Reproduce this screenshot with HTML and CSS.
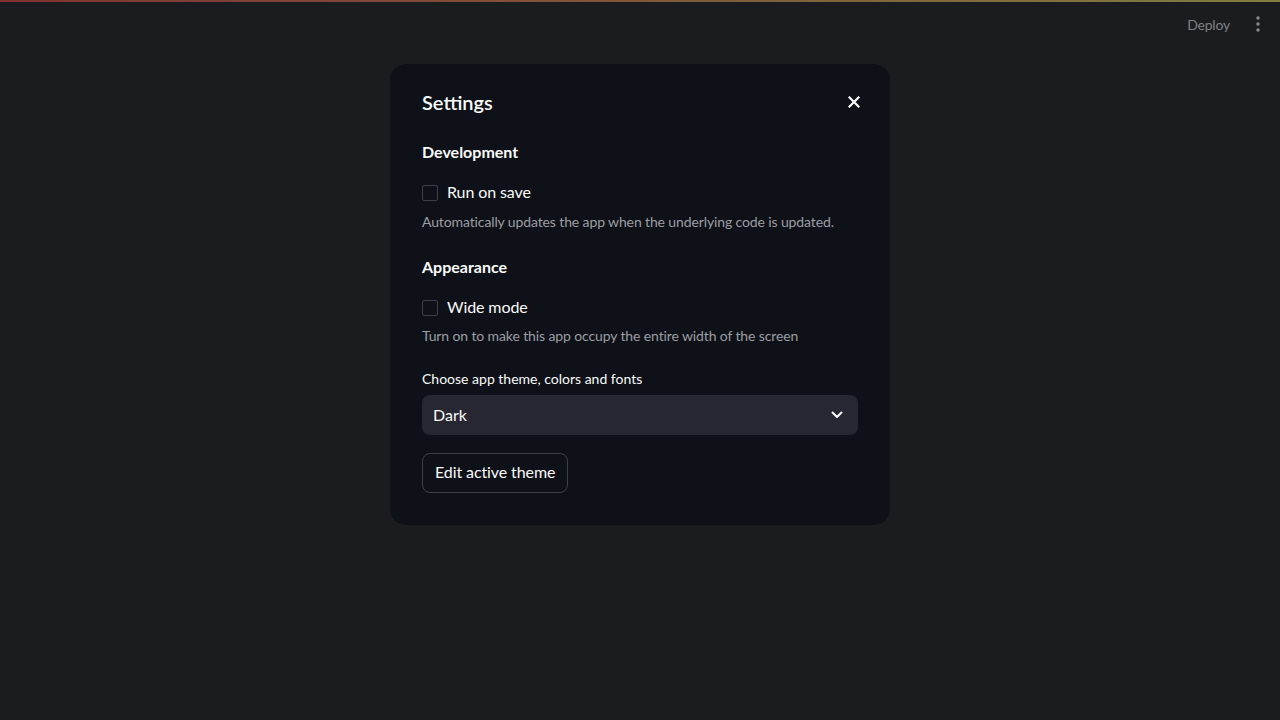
FILE: index.html
```html
<!DOCTYPE html>
<html>
<head>
<meta charset="utf-8">
<link rel="stylesheet" href="styles.css">
</head>
<body>
<div class="decoration"></div>
<header class="topbar">
  <span class="deploy">Deploy</span>
  <span class="kebab">
    <svg width="4" height="16" viewBox="0 0 4 16"><circle cx="2" cy="2" r="1.7" fill="#8a8b90"/><circle cx="2" cy="8" r="1.7" fill="#8a8b90"/><circle cx="2" cy="14" r="1.7" fill="#8a8b90"/></svg>
  </span>
</header>
<main class="stage">
  <section class="modal">
    <div class="modal-head">
      <h2 class="title">Settings</h2>
      <span class="close">
        <svg width="12" height="12" viewBox="0 0 12 12"><path d="M1.5 1.5 L10.5 10.5 M10.5 1.5 L1.5 10.5" stroke="#fafafa" stroke-width="2.2" stroke-linecap="square"/></svg>
      </span>
    </div>
    <div class="group">
      <h3 class="group-title">Development</h3>
      <label class="check"><span class="box"></span><span class="check-label">Run on save</span></label>
      <p class="help">Automatically updates the app when the underlying code is updated.</p>
    </div>
    <div class="group">
      <h3 class="group-title">Appearance</h3>
      <label class="check"><span class="box"></span><span class="check-label">Wide mode</span></label>
      <p class="help">Turn on to make this app occupy the entire width of the screen</p>
      <div class="field-label">Choose app theme, colors and fonts</div>
      <div class="select">
        <span>Dark</span>
        <svg width="12" height="8" viewBox="0 0 12 8"><path d="M1.5 1.5 L6 6 L10.5 1.5" stroke="#fafafa" stroke-width="2" fill="none" stroke-linecap="round" stroke-linejoin="round"/></svg>
      </div>
      <button class="btn">Edit active theme</button>
    </div>
  </section>
</main>
</body>
</html>
```

FILE: styles.css
```css
* { box-sizing: border-box; }
html, body { margin: 0; padding: 0; }
body {
  width: 1280px;
  height: 720px;
  background: #1b1c20;
  font-family: "Lato", "Noto Sans", sans-serif;
  color: #fafafa;
  overflow: hidden;
}
.decoration {
  height: 2px;
  background: linear-gradient(90deg, #803232, #807e40);
}
.topbar {
  height: 48px;
  display: flex;
  align-items: center;
  justify-content: flex-end;
  padding-right: 20px;
  gap: 26px;
  margin-top: -2px;
}
.deploy {
  font-size: 14px;
  color: #7f8085;
  letter-spacing: -0.2px;
}
.kebab { display: flex; align-items: center; height: 16px; }
.stage {
  display: flex;
  justify-content: center;
  padding-top: 16px;
}
.modal {
  width: 500px;
  background: #0e1117;
  border-radius: 16px;
  padding: 26px 32px 32px;
}
.modal-head {
  display: flex;
  justify-content: space-between;
  align-items: center;
  height: 26px;
}
.title {
  margin: 0;
  font-size: 20px;
  font-weight: 600;
  position: relative;
  top: -1px;
}
.close { display: flex; margin-right: -2px; position: relative; top: -1px; }
.group { margin-top: 24px; }
.group + .group { margin-top: 23px; }
.group-title {
  margin: 0;
  font-size: 16px;
  font-weight: 700;
  line-height: 24px;
}
.check {
  display: flex;
  align-items: center;
  gap: 9px;
  margin-top: 15px;
  height: 24px;
}
.box {
  width: 16px;
  height: 16px;
  border: 1px solid #3d3f47;
  border-radius: 2px;
  margin-top: 3px;
}
.check-label { font-size: 16px; letter-spacing: -0.1px; }
.help {
  margin: 9px 0 0;
  font-size: 14px;
  color: #9d9ea3;
  line-height: 20px;
  letter-spacing: -0.12px;
}
.group + .group .help { margin-top: 8px; }
.field-label {
  margin-top: 23px;
  font-size: 14px;
  line-height: 20px;
}
.select {
  margin-top: 6px;
  height: 40px;
  background: #262730;
  border-radius: 8px;
  display: flex;
  align-items: center;
  justify-content: space-between;
  padding: 0 15px 2px 11px;
  font-size: 16px;
}
.select svg { margin-top: 2px; }
.btn {
  display: block;
  margin-top: 18px;
  height: 40px;
  padding: 0 12px 3px;
  background: transparent;
  border: 1px solid #3e4047;
  border-radius: 8px;
  color: #fafafa;
  font-family: inherit;
  font-size: 16px;
  letter-spacing: -0.1px;
}
```
